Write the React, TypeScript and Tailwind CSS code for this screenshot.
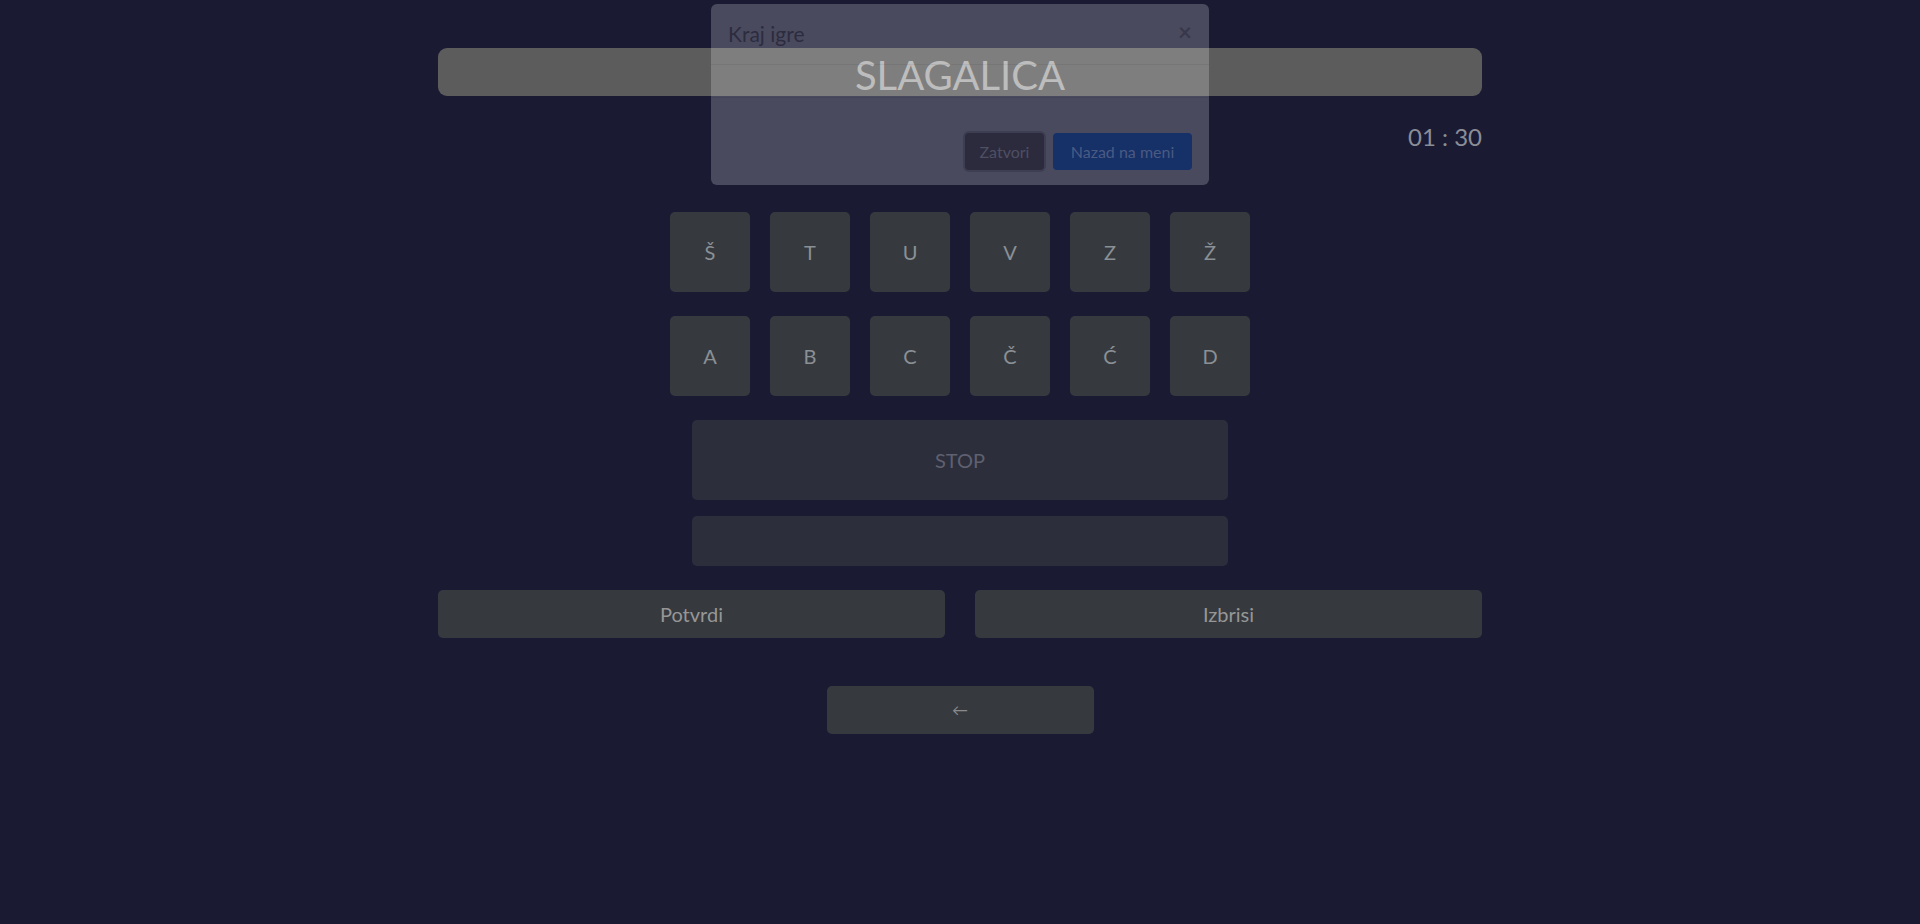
import React from "react";

const row1 = ["Š", "T", "U", "V", "Z", "Ž"];
const row2 = ["A", "B", "C", "Č", "Ć", "D"];

function Tile({ l }: { l: string }) {
  return (
    <div className="w-[80px] h-[80px] rounded-[5px] bg-[#363a3f] flex items-center justify-center text-[20px] text-[#8b9095]">
      {l}
    </div>
  );
}

export default function App() {
  return (
    <div
      className="relative min-h-[924px] h-screen w-full bg-[#1a1a33] overflow-hidden"
      style={{ fontFamily: "Lato, 'Noto Sans', sans-serif" }}
    >
      <div className="w-[1044px] mx-auto pt-[48px] flex flex-col">
        <div className="h-[48px] rounded-[9px] bg-[#5c5c5c] flex items-center justify-center pt-[5px] text-[40px] leading-none text-[#acacac]">
          SLAGALICA
        </div>
        <div className="mt-[23px] h-[36px] flex items-center justify-end text-[24px] text-[#8a8e97]">
          01 : 30
        </div>
        <div className="mt-[57px] flex flex-col items-center">
          <div className="flex gap-[20px]">
            {row1.map((l) => (
              <Tile key={l} l={l} />
            ))}
          </div>
          <div className="mt-[24px] flex gap-[20px]">
            {row2.map((l) => (
              <Tile key={l} l={l} />
            ))}
          </div>
          <div className="mt-[24px] w-[536px] h-[80px] rounded-[5px] bg-[#2c2e3b] flex items-center justify-center text-[20px] text-[#5f6070]">
            STOP
          </div>
          <div className="mt-[16px] w-[536px] h-[50px] rounded-[5px] bg-[#2c2e3b]" />
        </div>
        <div className="mt-[24px] flex gap-[30px]">
          <div className="flex-1 h-[48px] rounded-[5px] bg-[#363a3f] flex items-center justify-center text-[20px] text-[#969696]">
            Potvrdi
          </div>
          <div className="flex-1 h-[48px] rounded-[5px] bg-[#363a3f] flex items-center justify-center text-[20px] text-[#969696]">
            Izbrisi
          </div>
        </div>
        <div className="mt-[48px] flex justify-center">
          <div className="w-[267px] h-[48px] rounded-[5px] bg-[#363a3f] flex items-center justify-center text-[16px] text-[#8a8a8a]">
            ←
          </div>
        </div>
      </div>

      {/* Modal (fading in) */}
      <div className="absolute top-[4px] left-[711px] w-[498px] h-[181px] rounded-[6px] bg-white/[0.21] flex flex-col">
        <div className="h-[61px] px-[17px] flex items-center justify-between border-b border-black/[0.06]">
          <span className="text-[21px] text-[#2c2c3e]">Kraj igre</span>
          <span className="text-[24px] font-bold leading-none text-[#38384b] -mt-[4px]">×</span>
        </div>
        <div className="h-[32px]" />
        <div className="flex-1 border-t border-black/[0.06] flex items-end justify-end gap-[9px] pr-[17px] pb-[15px]">
          <div className="w-[79px] h-[37px] rounded-[4px] bg-[#2b2b3d] ring-2 ring-[#3e3e52] flex items-center justify-center text-[16px] text-[#4f4f63]">
            Zatvori
          </div>
          <div className="w-[139px] h-[37px] rounded-[4px] bg-[#163068] flex items-center justify-center text-[16px] text-[#4b5a83]">
            Nazad na meni
          </div>
        </div>
      </div>
    </div>
  );
}
